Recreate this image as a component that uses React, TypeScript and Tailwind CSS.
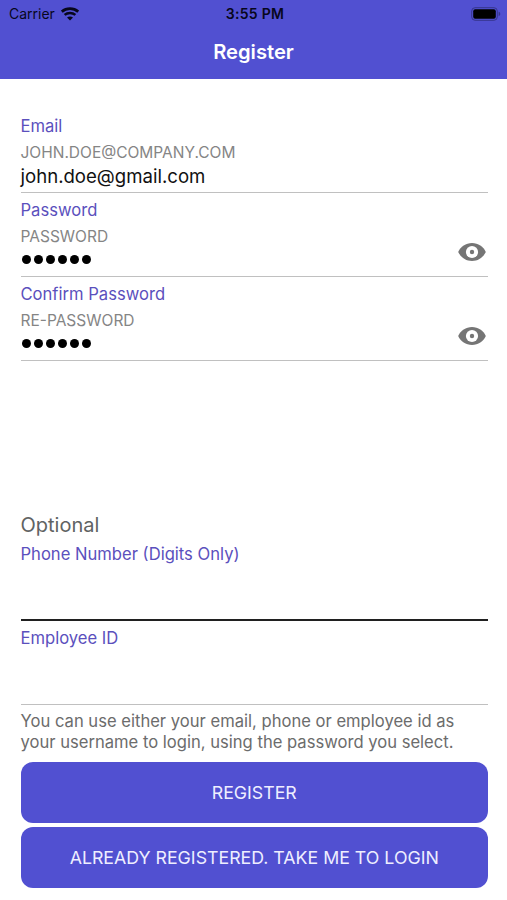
import type { ReactNode } from "react";

type FieldProps = {
  label: string;
  hint?: string;
  focused?: boolean;
  secure?: boolean;
  children?: ReactNode;
};

function WifiIcon() {
  return (
    <svg width="18" height="14" viewBox="0 0 18 14" fill="none" stroke="#07071c">
      <path d="M.8 4.600C5.400.700 12.600.700 17.200 4.600" strokeWidth="2.700" />
      <path d="M3.600 7.900c3.100-2.700 7.700-2.700 10.800 0" strokeWidth="2.500" />
      <path d="M9 13.600 6 10.500c1.700-1.500 4.300-1.500 6 0Z" fill="#07071c" stroke="none" />
    </svg>
  );
}

function BatteryIcon() {
  return (
    <svg width="30" height="14" viewBox="0 0 30 14">
      <rect x=".7" y=".7" width="25.6" height="12.6" rx="3.4" fill="none" stroke="#36358c" />
      <rect x="2.2" y="2.2" width="22.6" height="9.6" rx="2" fill="#000" />
      <path d="M27.6 4.8c2.2.6 2.2 3.8 0 4.4Z" fill="#36358c" />
    </svg>
  );
}

function EyeIcon() {
  return (
    <svg width="28" height="18" viewBox="0 0 28 18">
      <path
        d="M14 0C7.8 0 2.6 3.7.2 9c2.4 5.3 7.6 9 13.8 9s11.4-3.7 13.8-9C25.4 3.7 20.2 0 14 0Z"
        fill="#757575"
      />
      <circle cx="14" cy="9" r="6.1" fill="#fff" />
      <circle cx="14" cy="9" r="2.2" fill="#757575" />
    </svg>
  );
}

function Dots() {
  return (
    <div className="flex gap-[3px] pt-[9px] pl-[1.5px]">
      {[0, 1, 2, 3, 4, 5].map((dot) => (
        <span key={dot} className="h-[9px] w-[9px] rounded-full bg-black" />
      ))}
    </div>
  );
}

function Field({ label, hint, focused, secure, children }: FieldProps) {
  return (
    <div
      className={
        focused
          ? "flex h-[84px] flex-col border-b-2 border-[#202020]"
          : "flex h-[84px] flex-col border-b border-[#c0c0c0]"
      }
    >
      <label className="h-[34px] text-[16.6px] leading-[34px] text-[#5b50bd]">{label}</label>
      <div className="flex flex-1 justify-between">
        <div>
          {hint && <div className="h-[19px] text-[15.5px] leading-[19px] text-[#858585]">{hint}</div>}
          {children}
        </div>
        {secure && (
          <button className="mt-[16px] mr-[2px] h-[18px] self-start" aria-label="Show password">
            <EyeIcon />
          </button>
        )}
      </div>
    </div>
  );
}

export default function App() {
  return (
    <div className="h-[900px] w-full bg-white font-['Inter',sans-serif]">
      {/* Status bar and title */}
      <header className="h-[79px] bg-[#5150d1]">
        <div className="grid h-[27px] grid-cols-3 items-center pr-[6px] pl-[9px] text-[#07071c]">
          <div className="flex items-center gap-[6px] text-[14px]">
            Carrier
            <WifiIcon />
          </div>
          <div className="text-center text-[14px] font-semibold tracking-[0.3px]">3:55 PM</div>
          <div className="flex justify-end">
            <BatteryIcon />
          </div>
        </div>
        <h1 className="text-center text-[20.2px] leading-[50px] font-semibold text-white">Register</h1>
      </header>

      <main className="pt-[30px] pr-[19px] pl-[20.5px]">
        <Field label="Email" hint="JOHN.DOE@COMPANY.COM">
          <div className="text-[18.6px] leading-[28px] text-[#111]">john.doe@gmail.com</div>
        </Field>
        <Field label="Password" hint="PASSWORD" secure>
          <Dots />
        </Field>
        <Field label="Confirm Password" hint="RE-PASSWORD" secure>
          <Dots />
        </Field>

        <h2 className="mt-[151px] h-[25px] text-[20px] leading-[27px] text-[#5f6363]">Optional</h2>
        <Field label="Phone Number (Digits Only)" focused />
        <Field label="Employee ID" />

        <p className="mt-[6px] text-[16.6px] leading-[20.5px] whitespace-nowrap text-[#6c6c6c]">
          You can use either your email, phone or employee id as
          <br />
          your username to login, using the password you select.
        </p>

        <div className="mt-[10px] flex flex-col gap-[4px] text-[17.75px] text-[#eeeeff]">
          <button className="h-[61px] rounded-[12px] bg-[#5150d1] pt-[2px]">REGISTER</button>
          <button className="h-[61px] rounded-[12px] bg-[#5150d1] pt-[2px]">
            ALREADY REGISTERED. TAKE ME TO LOGIN
          </button>
        </div>
      </main>
    </div>
  );
}
